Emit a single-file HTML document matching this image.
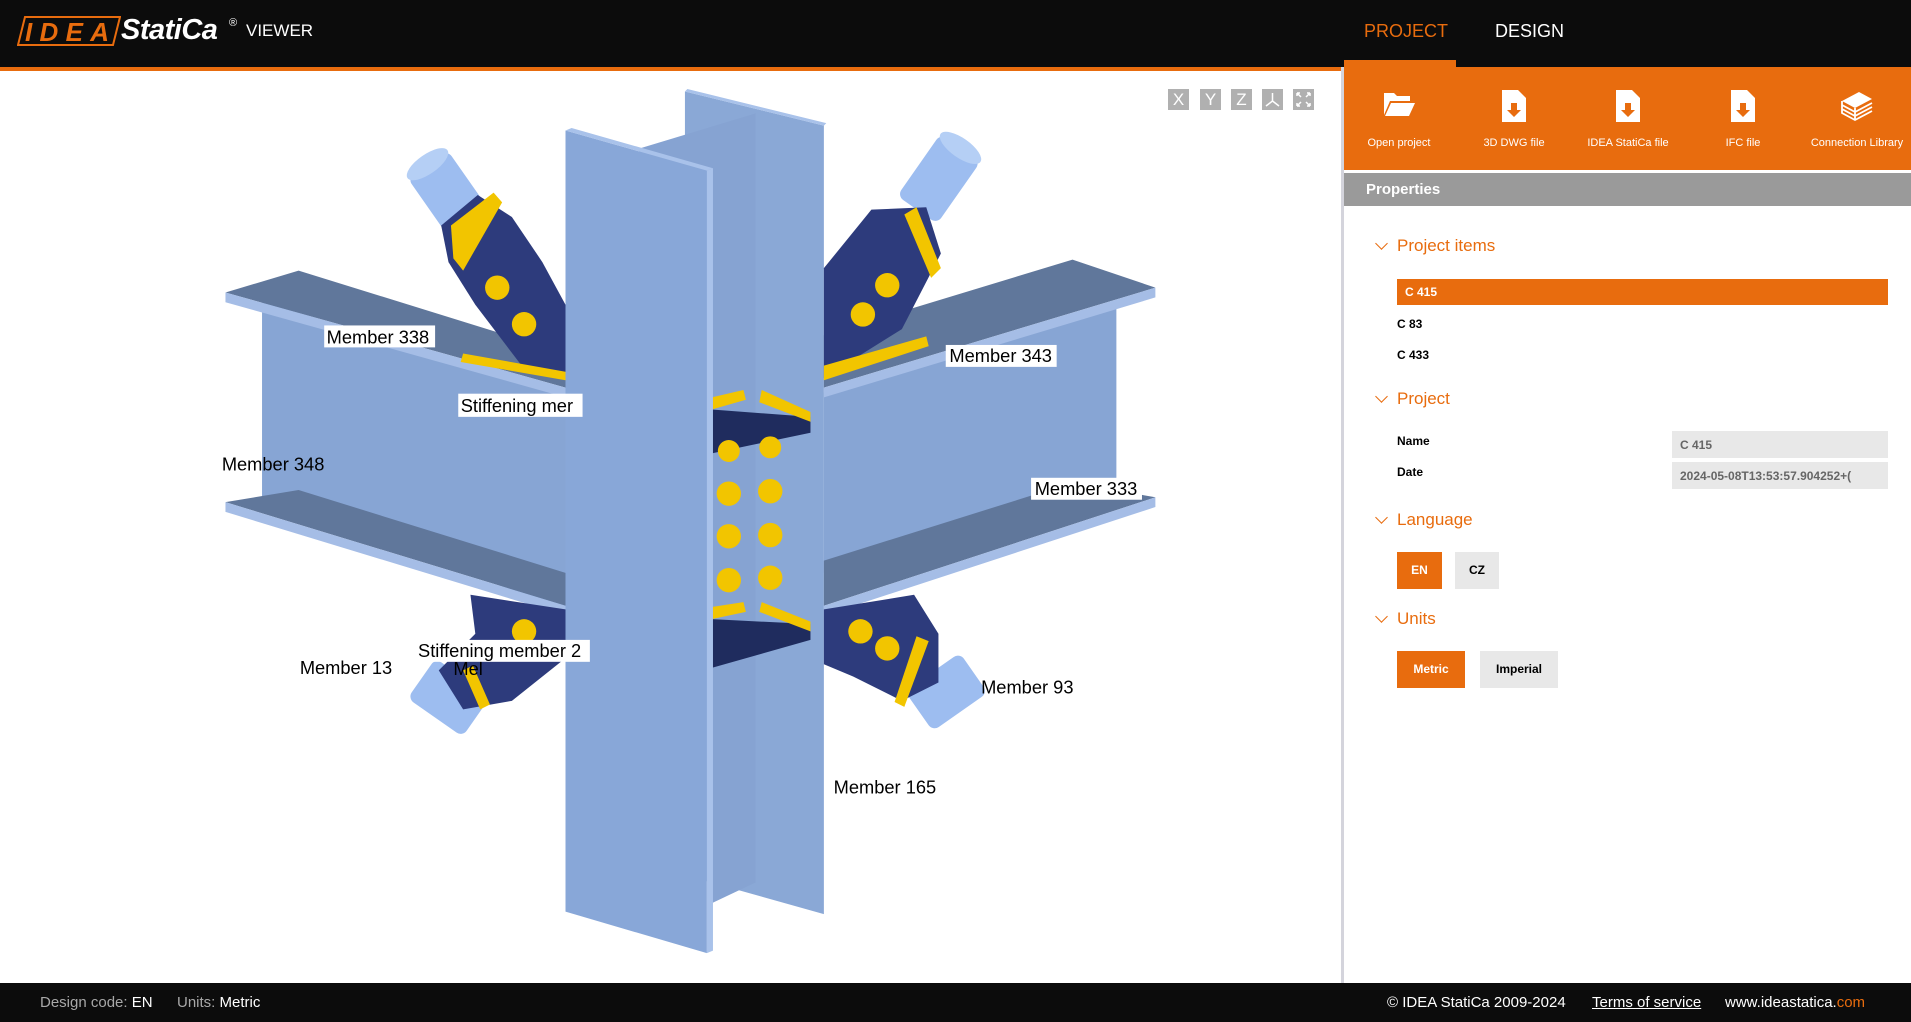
<!DOCTYPE html>
<html><head><meta charset="utf-8"><style>
*{margin:0;padding:0;box-sizing:border-box}
body{width:1911px;height:1022px;overflow:hidden;background:#fff;font-family:"Liberation Sans",sans-serif;position:relative}
.abs{position:absolute}
#hdr{left:0;top:0;width:1911px;height:67px;background:#0c0c0c}
#oline{left:0;top:67px;width:1344px;height:4px;background:#e86c0e}
.nav{top:21px;font-size:18px;color:#fff}
#tabind{left:1344px;top:60px;width:112px;height:10px;background:#e86c0e}
#panel{left:1341px;top:67px;width:570px;height:916px;background:#fff;border-left:3px solid #d4d4dc}
#tb{left:1344px;top:67px;width:567px;height:103px;background:#e86c0e}
.tbi{position:absolute;top:0;width:110px;text-align:center;color:#fff;font-size:11px}
.tbi svg{display:block;margin:22px auto 0}
.tbi span{display:block;position:absolute;top:70px;width:100%;white-space:nowrap}
#props{left:1344px;top:173px;width:567px;height:33px;background:#9a9a9a;color:#fff;font-weight:bold;font-size:15px;padding:8px 0 0 22px}
.h{color:#e86c0e;font-size:17px;left:1397px}
.chev{left:1377px;width:9px;height:9px;border-right:1.5px solid #e86c0e;border-bottom:1.5px solid #e86c0e;transform:rotate(45deg)}
.it{font-size:12px;font-weight:bold;color:#000;left:1397px}
.btn{font-size:12px;font-weight:bold;text-align:center;line-height:37px;height:37px}
#ftr{left:0;top:983px;width:1911px;height:39px;background:#0c0c0c;font-size:15px;color:#a8a8a8}
#ftr span{position:absolute;top:11px}
.w{color:#fff}
.vb{top:89px;width:21px;height:21px;background:#b0b0b0;color:#fff;font-size:17px;text-align:center;line-height:21px}
</style></head><body>
<div id="hdr" class="abs">
 <svg class="abs" style="left:17px;top:16px" width="104" height="30" viewBox="0 0 104 30"><path d="M8 1 H103 L96 29 H1 Z" fill="none" stroke="#e86c0e" stroke-width="2"/><text x="8" y="25" font-family="Liberation Sans" font-weight="bold" font-style="italic" font-size="26" fill="#e86c0e" textLength="84">IDEA</text></svg>
 <div class="abs" style="left:121px;top:14px;color:#fff;font-size:29px;font-weight:bold;font-style:italic;letter-spacing:-0.5px">StatiCa</div>
 <div class="abs" style="left:229px;top:17px;color:#fff;font-size:11px">®</div>
 <div class="abs" style="left:246px;top:21px;color:#fff;font-size:17px">VIEWER</div>
 <div class="abs nav" style="left:1364px;color:#e86c0e">PROJECT</div>
 <div class="abs nav" style="left:1495px">DESIGN</div>
</div>
<div id="oline" class="abs"></div>
<div id="panel" class="abs"></div>
<div id="tabind" class="abs"></div>
<div id="tb" class="abs">
 <div class="tbi" style="left:0px"><svg width="34" height="30" viewBox="0 0 34 30"><path d="M2 4 H12 L15 7 H28 V12 H8 L2 26 Z" fill="#fff"/><path d="M9 14 H33 L27 27 H3 Z" fill="#fff"/></svg><span>Open project</span></div>
 <div class="tbi" style="left:115px"><svg width="26" height="34" viewBox="0 0 26 34"><path d="M1 1 H17 L25 9 V33 H1 Z" fill="#fff"/><path d="M10 14 H16 V21 H20 L13 28 L6 21 H10Z" fill="#e86c0e"/></svg><span>3D DWG file</span></div>
 <div class="tbi" style="left:229px"><svg width="26" height="34" viewBox="0 0 26 34"><path d="M1 1 H17 L25 9 V33 H1 Z" fill="#fff"/><path d="M10 14 H16 V21 H20 L13 28 L6 21 H10Z" fill="#e86c0e"/></svg><span>IDEA StatiCa file</span></div>
 <div class="tbi" style="left:344px"><svg width="26" height="34" viewBox="0 0 26 34"><path d="M1 1 H17 L25 9 V33 H1 Z" fill="#fff"/><path d="M10 14 H16 V21 H20 L13 28 L6 21 H10Z" fill="#e86c0e"/></svg><span>IFC file</span></div>
 <div class="tbi" style="left:458px"><svg width="36" height="36" viewBox="0 0 36 36"><path d="M3 12 L20 3 L33 10 L16 19 Z" fill="#fff"/><path d="M3 12 V16 L16 23 L33 14 M3 16 V20 L16 27 L33 18 M3 20 V24 L16 31 L33 22 M16 19 V31" fill="none" stroke="#fff" stroke-width="1.8"/></svg><span>Connection Library</span></div>
</div>
<div id="props" class="abs">Properties</div>

<div class="abs chev" style="top:239px"></div><div class="abs h" style="top:236px">Project items</div>
<div class="abs" style="left:1397px;top:279px;width:491px;height:26px;background:#e86c0e"></div>
<div class="abs it" style="left:1405px;top:285px;color:#fff">C 415</div>
<div class="abs it" style="top:317px">C 83</div>
<div class="abs it" style="top:348px">C 433</div>
<div class="abs chev" style="top:392px"></div><div class="abs h" style="top:389px">Project</div>
<div class="abs it" style="top:434px">Name</div>
<div class="abs it" style="top:465px">Date</div>
<div class="abs" style="left:1672px;top:431px;width:216px;height:27px;background:#e8e8e8;color:#666;font-size:12px;font-weight:bold;padding:7px 0 0 8px">C 415</div>
<div class="abs" style="left:1672px;top:462px;width:216px;height:27px;background:#e8e8e8;color:#666;font-size:12px;font-weight:bold;padding:7px 0 0 8px;overflow:hidden;white-space:nowrap">2024-05-08T13:53:57.904252+(</div>
<div class="abs chev" style="top:513px"></div><div class="abs h" style="top:510px">Language</div>
<div class="abs btn" style="left:1397px;top:552px;width:45px;background:#e86c0e;color:#fff">EN</div>
<div class="abs btn" style="left:1455px;top:552px;width:44px;background:#e8e8e8;color:#000">CZ</div>
<div class="abs chev" style="top:612px"></div><div class="abs h" style="top:609px">Units</div>
<div class="abs btn" style="left:1397px;top:651px;width:68px;background:#e86c0e;color:#fff">Metric</div>
<div class="abs btn" style="left:1480px;top:651px;width:78px;background:#e8e8e8;color:#000">Imperial</div>

<div class="abs vb" style="left:1168px">X</div>
<div class="abs vb" style="left:1200px">Y</div>
<div class="abs vb" style="left:1231px">Z</div>
<div class="abs vb" style="left:1262px"><svg width="21" height="21" viewBox="0 0 21 21"><path d="M10.5 4 V12 L4 17 M10.5 12 L17 17" stroke="#fff" stroke-width="1.5" fill="none"/></svg></div>
<div class="abs vb" style="left:1293px"><svg width="21" height="21" viewBox="0 0 21 21"><path d="M4 4 L8 8 M4 4 H7 M4 4 V7 M17 4 L13 8 M17 4 H14 M17 4 V7 M4 17 L8 13 M4 17 H7 M4 17 V14 M17 17 L13 13 M17 17 H14 M17 17 V14" stroke="#fff" stroke-width="1.5" fill="none"/></svg></div>

<svg class="abs" style="left:0;top:0" width="1341" height="983" viewBox="0 0 1100.3 806.5" font-family="Liberation Sans" font-size="15">
 <polygon points="562,75 676,103 676,750 562,718" fill="#8aa8d6"/>
 <polygon points="562,75 676,103 678,101 564,73" fill="#a9c2ea"/>
 <polygon points="215,248 464,320 464,500 215,410" fill="#87a5d4"/>
 <polygon points="185,240 245,222 464,290 464,318" fill="#60779b"/>
 <polygon points="185,240 464,318 464,326 185,248" fill="#a5bde6"/>
 <polygon points="185,412 245,402 464,470 464,497" fill="#60779b"/>
 <polygon points="185,412 464,497 464,505 185,420" fill="#a5bde6"/>
 <polygon points="916,246 676,322 676,470 916,396" fill="#87a5d4"/>
 <polygon points="948,236 880,213 676,275 676,318" fill="#60779b"/>
 <polygon points="948,236 676,318 676,326 948,244" fill="#a5bde6"/>
 <polygon points="948,408 880,396 676,460 676,497" fill="#60779b"/>
 <polygon points="948,408 676,497 676,505 948,416" fill="#a5bde6"/>
 <!-- top-left -->
 <g transform="rotate(-35 372 165)"><rect x="352" y="128" width="40" height="62" rx="6" fill="#9dbdf0"/><ellipse cx="372" cy="128" rx="20" ry="8" fill="#b5cff5"/></g>
 <polygon points="362,185 392,160 420,178 445,215 464,250 464,310 428,300 390,250 368,215" fill="#2d3b7c"/>
 <polygon points="370,185 405,158 412,166 380,222 372,212" fill="#f2c500"/>
 <polygon points="380,290 464,305 464,312 378,297" fill="#f2c500"/>
 <circle cx="408" cy="236" r="10" fill="#f2c500"/><circle cx="430" cy="266" r="10" fill="#f2c500"/>
 <!-- top-right -->
 <g transform="rotate(35 768 150)"><rect x="748" y="115" width="40" height="62" rx="6" fill="#9dbdf0"/><ellipse cx="768" cy="115" rx="20" ry="8" fill="#b5cff5"/></g>
 <polygon points="676,220 715,172 760,170 772,208 740,270 676,310" fill="#2d3b7c"/>
 <polygon points="742,176 752,170 772,220 764,228" fill="#f2c500"/>
 <polygon points="676,300 760,276 762,284 676,312" fill="#f2c500"/>
 <circle cx="728" cy="234" r="10" fill="#f2c500"/><circle cx="708" cy="258" r="10" fill="#f2c500"/>
 <!-- bottom-left -->
 <g transform="rotate(-55 368 572)"><rect x="348" y="545" width="40" height="55" rx="6" fill="#9dbdf0"/></g>
 <polygon points="386,488 464,500 464,540 420,575 380,582 360,550 390,520" fill="#2d3b7c"/>
 <polygon points="380,550 388,546 402,578 394,582" fill="#f2c500"/>
 <circle cx="430" cy="518" r="10" fill="#f2c500"/>
 <!-- bottom-right -->
 <g transform="rotate(55 776 568)"><rect x="756" y="540" width="40" height="55" rx="6" fill="#9dbdf0"/></g>
 <polygon points="676,500 750,488 770,520 770,560 740,575 700,555 676,545" fill="#2d3b7c"/>
 <polygon points="752,522 762,526 742,580 734,576" fill="#f2c500"/>
 <circle cx="706" cy="518" r="10" fill="#f2c500"/><circle cx="728" cy="532" r="10" fill="#f2c500"/>
 <polygon points="524,122 620,93 620,724 582,742" fill="#86a3d2"/>
 <polygon points="584,336 665,342 665,355 584,372" fill="#1f2c5e"/>
 <polygon points="584,326 610,320 612,328 584,336" fill="#f2c500"/>
 <polygon points="625,320 665,338 665,346 623,330" fill="#f2c500"/>
 <polygon points="584,508 665,512 665,525 584,548" fill="#1f2c5e"/>
 <polygon points="584,498 610,494 612,502 584,508" fill="#f2c500"/>
 <polygon points="625,494 665,510 665,518 623,502" fill="#f2c500"/>
 <g fill="#f2c500"><circle cx="598" cy="370" r="9"/><circle cx="632" cy="367" r="9"/><circle cx="598" cy="405" r="10"/><circle cx="632" cy="403" r="10"/><circle cx="598" cy="440" r="10"/><circle cx="632" cy="439" r="10"/><circle cx="598" cy="476" r="10"/><circle cx="632" cy="474" r="10"/></g>
 <polygon points="464,107 580,140 580,782 464,748" fill="#88a7d8"/>
 <polygon points="580,140 585,138 585,780 580,782" fill="#a9c2ea"/>
 <polygon points="464,107 580,140 585,138 469,105" fill="#a9c2ea"/>
 <g>
  <rect x="266" y="267" width="91" height="18" fill="#fff"/><text x="268" y="282">Member 338</text>
  <rect x="776" y="283" width="91" height="18" fill="#fff"/><text x="779" y="297">Member 343</text>
  <rect x="376" y="323" width="102" height="19" fill="#fff"/><text x="378" y="338">Stiffening mer</text>
  <text x="182" y="386">Member 348</text>
  <rect x="846" y="392" width="91" height="18" fill="#fff"/><text x="849" y="406">Member 333</text>
  <text x="246" y="553">Member 13</text>
  <text x="372" y="554">Mel</text>
  <rect x="340" y="525" width="144" height="18" fill="#fff"/><text x="343" y="539">Stiffening member 2</text>
  <text x="805" y="569">Member 93</text>
  <text x="684" y="651">Member 165</text>
 </g>
</svg>

<div id="ftr" class="abs">
 <span style="left:40px">Design code: <b class="w" style="font-weight:normal">EN</b></span>
 <span style="left:177px">Units: <b class="w" style="font-weight:normal">Metric</b></span>
 <span class="w" style="left:1387px">© IDEA StatiCa 2009-2024</span>
 <span class="w" style="left:1592px;text-decoration:underline">Terms of service</span>
 <span style="left:1725px;color:#e86c0e"><b class="w" style="font-weight:normal">www.ideastatica.</b>com</span>
</div>
</body></html>
